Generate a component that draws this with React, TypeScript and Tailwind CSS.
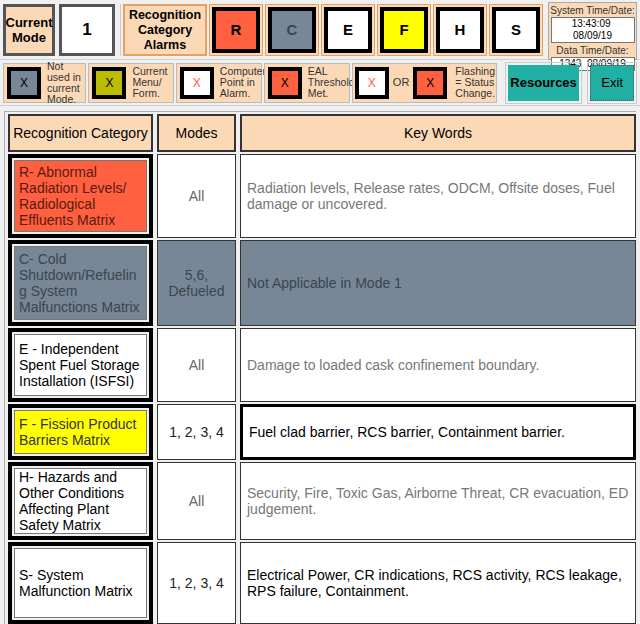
import React from "react";

const F = { fontFamily: '"Liberation Sans", Arial, sans-serif' };

function Alarm({ l, bg }: { l: string; bg: string }) {
  return (
    <div className="h-[52px] w-[54px] bg-[#fcd9b6] border border-[#e8a060] p-[2px] flex">
      <div className={`flex-1 border-[4px] border-black flex items-center justify-center text-[15px] font-bold ${bg}`}>{l}</div>
    </div>
  );
}

function XBox({ bg, xc }: { bg: string; xc: string }) {
  return (
    <div className="w-[34px] h-[32px] border-[4px] border-black flex items-center justify-center shrink-0 ${bg}" >
      <div className={`w-full h-full flex items-center justify-center text-[13px] ${bg} ${xc}`}>X</div>
    </div>
  );
}

const rows = [
  { cat: "R- Abnormal Radiation Levels/ Radiological Effluents Matrix", catBg: "bg-[#ff6040]", catTx: "text-[#5a1a10]", modes: "All", modesBg: "bg-white", modesTx: "text-[#666]", kw: "Radiation levels, Release rates, ODCM, Offsite doses, Fuel damage or uncovered.", kwBg: "bg-white", kwTx: "text-[#777]", h: "h-[84px]", bold: false },
  { cat: "C- Cold Shutdown/Refuelin g System Malfunctions Matrix", catBg: "bg-[#778797]", catTx: "text-[#3a4550]", modes: "5,6, Defueled", modesBg: "bg-[#778797]", modesTx: "text-[#3a4550]", kw: "Not Applicable in Mode 1", kwBg: "bg-[#778797]", kwTx: "text-[#3a4550]", h: "h-[86px]", bold: false },
  { cat: "E - Independent Spent Fuel Storage Installation (ISFSI)", catBg: "bg-white", catTx: "text-black", modes: "All", modesBg: "bg-white", modesTx: "text-[#666]", kw: "Damage to loaded cask confinement boundary.", kwBg: "bg-white", kwTx: "text-[#777]", h: "h-[74px]", bold: false },
  { cat: "F - Fission Product Barriers Matrix", catBg: "bg-[#ffff00]", catTx: "text-[#333]", modes: "1, 2, 3, 4", modesBg: "bg-white", modesTx: "text-[#222]", kw: "Fuel clad barrier, RCS barrier, Containment barrier.", kwBg: "bg-white", kwTx: "text-black", h: "h-[56px]", bold: true },
  { cat: "H- Hazards and Other Conditions Affecting Plant Safety Matrix", catBg: "bg-white", catTx: "text-black", modes: "All", modesBg: "bg-white", modesTx: "text-[#666]", kw: "Security, Fire, Toxic Gas, Airborne Threat, CR evacuation, ED judgement.", kwBg: "bg-white", kwTx: "text-[#777]", h: "h-[78px]", bold: false },
  { cat: "S- System Malfunction Matrix", catBg: "bg-white", catTx: "text-black", modes: "1, 2, 3, 4", modesBg: "bg-white", modesTx: "text-[#222]", kw: "Electrical Power, CR indications, RCS activity, RCS leakage, RPS failure, Containment.", kwBg: "bg-white", kwTx: "text-black", h: "h-[82px]", bold: false },
];

export default function App() {
  return (
    <div className="w-[640px] h-[624px] bg-[#f0f0f0] overflow-hidden" style={F}>
      {/* top row */}
      <div className="flex items-start gap-[5px] px-[3px] pt-[2px] h-[60px] border-b border-[#d0d0d0]">
        <div className="flex gap-[4px] mt-[2px]">
          <div className="w-[52px] h-[52px] bg-[#fcd9b6] border-[3px] border-[#555] flex items-center justify-center text-center text-[13px] font-bold leading-[15px]">Current Mode</div>
          <div className="w-[56px] h-[52px] bg-white border-[3px] border-[#555] flex items-center justify-center text-[17px] font-bold">1</div>
        </div>
        <div className="flex gap-[2px] mt-[2px] border-l border-[#ccc] pl-[2px]">
          <div className="w-[84px] h-[52px] bg-[#fcd9b6] border-[2px] border-[#e8a060] flex items-center justify-center text-center text-[12.5px] font-bold leading-[15px]">Recognition Category Alarms</div>
          <Alarm l="R" bg="bg-[#ff6040]" />
          <Alarm l="C" bg="bg-[#778797] border-[#778797] text-[#3a4550]" />
          <Alarm l="E" bg="bg-white" />
          <Alarm l="F" bg="bg-[#ffff00]" />
          <Alarm l="H" bg="bg-white" />
          <Alarm l="S" bg="bg-white" />
        </div>
        <div className="ml-auto w-[94px] h-[58px] bg-[#fcd9b6] border border-[#aaa] flex flex-col items-center text-[10px] leading-[12px] pt-[2px]">
          <div className="text-[#333]">System Time/Date:</div>
          <div className="w-[84px] bg-white border border-[#777] text-center">13:43:09&nbsp; 08/09/19</div>
          <div className="text-[#333] mt-[2px]">Data Time/Date:</div>
          <div className="w-[84px] bg-white border border-[#777] text-center">1343&nbsp; 08/09/19</div>
        </div>
      </div>
      {/* legend row */}
      <div className="flex items-center gap-[2px] px-[3px] h-[46px] border-b border-[#d0d0d0]">
        {[
          { bg: "bg-[#778797]", xc: "text-black", t: "Not used in current Mode.", w: "w-[84px]" },
          { bg: "bg-[#bcbc00]", xc: "text-black", t: "Current Menu/ Form.", w: "w-[86px]" },
          { bg: "bg-white", xc: "text-[#ff6040]", t: "Computer Point in Alarm.", w: "w-[86px]" },
          { bg: "bg-[#ff6040]", xc: "text-black", t: "EAL Threshold Met.", w: "w-[86px]" },
        ].map((b, i) => (
          <div key={i} className={`${b.w} h-[40px] bg-[#fcd9b6] border border-[#bbb] flex items-center gap-[6px] pl-[3px]`}>
            <div className="w-[34px] h-[32px] border-[4px] border-black shrink-0 flex">
              <div className={`flex-1 flex items-center justify-center text-[12px] ${b.bg} ${b.xc}`}>X</div>
            </div>
            <div className="text-[10.5px] leading-[11px] text-[#333]">{b.t}</div>
          </div>
        ))}
        <div className="w-[146px] h-[40px] bg-[#fcd9b6] border border-[#bbb] flex items-center gap-[4px] pl-[2px]">
          <div className="w-[34px] h-[32px] border-[4px] border-black shrink-0 flex"><div className="flex-1 flex items-center justify-center text-[12px] bg-white text-[#ff6040]">X</div></div>
          <span className="text-[11px] text-[#333]">OR</span>
          <div className="w-[34px] h-[32px] border-[4px] border-black shrink-0 flex"><div className="flex-1 flex items-center justify-center text-[12px] bg-[#ff6040] text-black">X</div></div>
          <div className="text-[10.5px] leading-[11px] text-[#333] ml-[4px]">Flashing = Status Change.</div>
        </div>
        <div className="ml-[6px] w-[78px] h-[42px] border border-[#ccc] p-[2px] flex">
          <div className="flex-1 bg-[#20b0a4] flex items-center justify-center text-[13px] font-bold">Resources</div>
        </div>
        <div className="ml-[3px] w-[50px] h-[42px] border border-[#ccc] p-[2px] flex">
          <div className="flex-1 bg-[#20b0a4] border border-dotted border-[#555] flex items-center justify-center text-[13px]">Exit</div>
        </div>
      </div>
      {/* table */}
      <div className="mx-[4px] mt-[5px] border-l border-t border-[#aaa] pl-[3px] pt-[2px] flex flex-col gap-[2px] text-[14px] leading-[16px]">
        <div className="flex gap-[4px] h-[38px]">
          <div className="w-[145px] bg-[#fcd9b6] border-[2px] border-[#333] flex items-center justify-center">Recognition Category</div>
          <div className="w-[79px] bg-[#fcd9b6] border-[2px] border-[#333] flex items-center justify-center">Modes</div>
          <div className="flex-1 bg-[#fcd9b6] border-[2px] border-[#333] flex items-center justify-center">Key Words</div>
        </div>
        {rows.map((r, i) => (
          <div key={i} className={`flex gap-[4px] ${r.h}`}>
            <div className="w-[145px] border-[4px] border-black p-[2px] flex">
              <div className={`flex-1 border border-[#777] flex items-center px-[4px] ${r.catBg} ${r.catTx}`}>{r.cat}</div>
            </div>
            <div className={`w-[79px] border border-[#333] flex items-center justify-center text-center ${r.modesBg} ${r.modesTx}`}>{r.modes}</div>
            <div className={`flex-1 flex items-center px-[6px] ${r.bold ? "border-[3px] border-black" : "border border-[#333]"} ${r.kwBg} ${r.kwTx}`}>{r.kw}</div>
          </div>
        ))}
      </div>
    </div>
  );
}
